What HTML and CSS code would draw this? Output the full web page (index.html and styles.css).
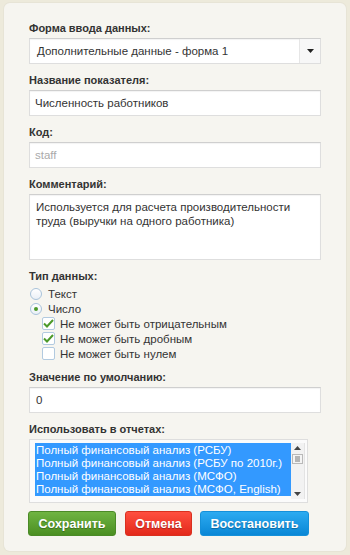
FILE: index.html
```html
<!DOCTYPE html>
<html lang="ru">
<head>
  <meta charset="UTF-8">
  <title>Показатель</title>
  <link rel="stylesheet" href="styles.css">
</head>
<body>
  <div class="card">
    <form class="form">
      <div class="field">
        <label class="field-label">Форма ввода данных:</label>
        <div class="input select">
          <span class="select-value">Дополнительные данные - форма 1</span>
          <span class="select-arrow">
            <svg width="7" height="4" viewBox="0 0 7 4"><path d="M0 0h7L3.5 4z" fill="#222"/></svg>
          </span>
        </div>
      </div>

      <div class="field">
        <label class="field-label">Название показателя:</label>
        <div class="input">Численность работников</div>
      </div>

      <div class="field">
        <label class="field-label">Код:</label>
        <div class="input input-disabled">staff</div>
      </div>

      <div class="field">
        <label class="field-label">Комментарий:</label>
        <div class="input textarea">Используется для расчета производительности труда (выручки на одного работника)</div>
      </div>

      <div class="field">
        <label class="field-label">Тип данных:</label>
        <div class="choices">
          <div class="choice"><span class="radio"></span>Текст</div>
          <div class="choice"><span class="radio checked"></span>Число</div>
          <div class="choice sub">
            <span class="checkbox"><svg width="11" height="9" viewBox="0 0 11 9"><path d="M1 4.5l3 3L10 1" fill="none" stroke="#4c9a2a" stroke-width="2"/></svg></span>
            Не может быть отрицательным
          </div>
          <div class="choice sub">
            <span class="checkbox"><svg width="11" height="9" viewBox="0 0 11 9"><path d="M1 4.5l3 3L10 1" fill="none" stroke="#4c9a2a" stroke-width="2"/></svg></span>
            Не может быть дробным
          </div>
          <div class="choice sub"><span class="checkbox"></span>Не может быть нулем</div>
        </div>
      </div>

      <div class="field">
        <label class="field-label">Значение по умолчанию:</label>
        <div class="input input-value">0</div>
      </div>

      <div class="field">
        <label class="field-label">Использовать в отчетах:</label>
        <div class="listbox">
          <div class="listbox-items">
            <div class="listbox-item">Полный финансовый анализ (РСБУ)</div>
            <div class="listbox-item">Полный финансовый анализ (РСБУ по 2010г.)</div>
            <div class="listbox-item">Полный финансовый анализ (МСФО)</div>
            <div class="listbox-item">Полный финансовый анализ (МСФО, English)</div>
          </div>
          <div class="scrollbar">
            <svg width="7" height="4" viewBox="0 0 7 4"><path d="M0 4h7L3.5 0z" fill="#444"/></svg>
            <svg class="thumb" width="11" height="10" viewBox="0 0 11 10">
              <rect x="0.5" y="0.5" width="10" height="9" fill="#f4f4f4" stroke="#b9b9b9"/>
              <path d="M3 3h5M3 5h5M3 7h5" stroke="#777"/>
            </svg>
            <span class="scrollbar-fill"></span>
            <svg width="7" height="4" viewBox="0 0 7 4"><path d="M0 0h7L3.5 4z" fill="#444"/></svg>
          </div>
        </div>
      </div>

      <div class="buttons">
        <button type="button" class="btn btn-save">Сохранить</button>
        <button type="button" class="btn btn-cancel">Отмена</button>
        <button type="button" class="btn btn-restore">Восстановить</button>
      </div>
    </form>
  </div>
</body>
</html>
```

FILE: styles.css
```css
/* Base */
body {
  margin: 0;
  background: #edeadb;
  font-family: "Liberation Sans", Arial, sans-serif;
  color: #333;
}

.card {
  margin: 3px 4px 4px;
  padding: 17px 25px 15px;
  background: #f6f5f0;
  border-radius: 6px;
  box-shadow: 0 0 0 1px #e7e4d6;
}

.field {
  margin-bottom: 8px;
}

.field-label {
  display: block;
  font-size: 11px;
  font-weight: bold;
  line-height: 16px;
  color: #333;
  margin-bottom: 2px;
}

/* Inputs */
.input {
  box-sizing: border-box;
  height: 26px;
  padding: 0 5px;
  background: #fff;
  border: 1px solid #dedede;
  border-top-color: #cfcfcf;
  box-shadow: inset 0 1px 1px rgba(0, 0, 0, 0.05);
  font-size: 11.5px;
  line-height: 24px;
  color: #333;
}

.input-disabled {
  color: #aaa;
}

.input-value {
  padding-left: 6px;
}

.textarea {
  height: 66px;
  padding: 5px 6px;
  line-height: 14px;
}

.select {
  display: flex;
  padding: 0 0 0 7px;
}

.select-value {
  flex: 1;
}

.select-arrow {
  width: 20px;
  display: flex;
  align-items: center;
  justify-content: center;
  background: #f7f7f7;
  border-left: 1px solid #e6e6e6;
}

/* Radios and checkboxes */
.choices {
  font-size: 11.5px;
}

.choice {
  display: flex;
  align-items: center;
  height: 15px;
}

.radio {
  box-sizing: border-box;
  width: 12px;
  height: 12px;
  margin: 0 6px 0 1px;
  border: 1px solid #a9c3da;
  border-radius: 50%;
  background: linear-gradient(#fff, #eaf0f6);
  display: flex;
  align-items: center;
  justify-content: center;
}

.radio.checked::after {
  content: "";
  width: 4px;
  height: 4px;
  border-radius: 50%;
  background: #4c9a2a;
}

.choice.sub {
  padding-left: 13px;
}

.checkbox {
  box-sizing: border-box;
  width: 13px;
  height: 13px;
  margin-right: 5px;
  border: 1px solid #b2cae0;
  border-radius: 2px;
  background: #fff;
  display: flex;
  align-items: center;
  justify-content: center;
}

/* Listbox */
.listbox {
  box-sizing: border-box;
  width: 279px;
  height: 64px;
  padding: 3px 2px 3px 5px;
  display: flex;
  align-items: flex-start;
  background: #fbfbfb;
  border: 1px solid #dedede;
}

.listbox-items {
  flex: 1;
  background: #3399ff;
  font-size: 11.5px;
  line-height: 13px;
  color: #fff;
  padding-top: 1px;
}

.listbox-item {
  padding-left: 1px;
  white-space: nowrap;
  overflow: hidden;
}

.scrollbar {
  width: 14px;
  height: 56px;
  display: flex;
  flex-direction: column;
  align-items: center;
  background: #f2f2f2;
  border-right: 1px solid #e3e3e3;
  padding: 3px 0;
  box-sizing: border-box;
}

.scrollbar .thumb {
  margin-top: 4px;
}

.scrollbar-fill {
  flex: 1;
}

/* Buttons */
.buttons {
  display: flex;
  margin-left: -1px;
}

.btn {
  height: 25px;
  padding: 0;
  border: 1px solid;
  border-radius: 3px;
  font-family: "Liberation Sans", Arial, sans-serif;
  font-size: 12.5px;
  font-weight: bold;
  color: #fff;
  text-shadow: 0 1px 1px rgba(0, 0, 0, 0.3);
}

.btn-save {
  width: 88px;
  background: linear-gradient(#6fb442, #4b8f22);
  border-color: #4b8a27;
}

.btn-cancel {
  width: 67px;
  margin-left: 9px;
  background: linear-gradient(#ff4f3f, #e3291b);
  border-color: #d9301f;
}

.btn-restore {
  width: 109px;
  margin-left: 8px;
  background: linear-gradient(#2cabf1, #0a87d6);
  border-color: #1590d9;
}
```
